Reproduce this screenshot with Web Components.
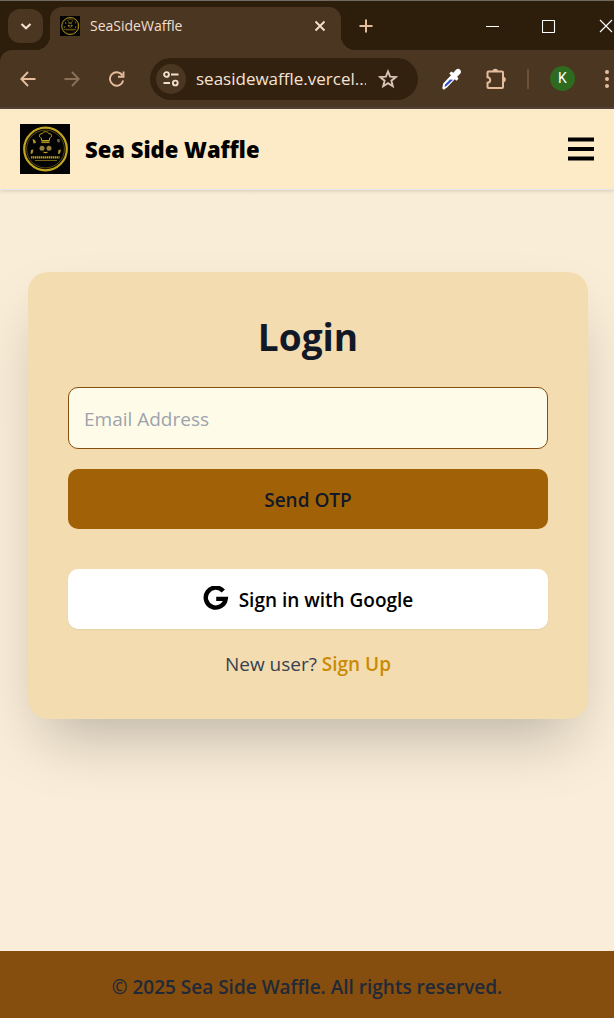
<!DOCTYPE html>
<html lang="en">
<head>
<meta charset="utf-8">
<meta name="viewport" content="width=device-width, initial-scale=1">
<title>SeaSideWaffle</title>
<style>
  html, body { margin: 0; }
  body { font-family: "Open Sans", "Noto Sans", sans-serif; font-size: 19px; line-height: 30px; color: #000; background: #faedd7; }
</style>
</head>
<body>
<browser-window>
  <tab-strip slot="chrome">SeaSideWaffle</tab-strip>
  <tool-bar slot="chrome" address="seasidewaffle.vercel..."></tool-bar>
  <site-header>Sea Side Waffle</site-header>
  <login-card heading="Login"></login-card>
  <site-footer>© 2025 Sea Side Waffle. All rights reserved.</site-footer>
</browser-window>

<script>
const define = (name, html, setup) => customElements.define(name, class extends HTMLElement {
  constructor() {
    super();
    this.attachShadow({ mode: 'open' }).innerHTML = html;
  }
  connectedCallback() { if (setup) setup(this, this.shadowRoot); }
});

const reset = `
  :host, *, *::before, *::after { box-sizing: border-box; }
  button { font: inherit; border: 0; padding: 0; margin: 0; background: none; color: inherit; cursor: pointer;
           display: flex; align-items: center; justify-content: center; }
  svg { display: block; flex: none; }`;

define('waffle-logo', `
<style>:host { display: block; width: 50px; height: 50px; flex: none; } svg { display: block; width: 100%; height: 100%; }</style>
<svg viewBox="0 0 50 50" aria-hidden="true">
  <rect width="50" height="50" fill="#030303"/>
  <g fill="none" stroke="#c2a41e">
    <circle cx="25.5" cy="25" r="21.300" stroke-width="2.200"/>
    <circle cx="25.5" cy="25" r="18.900" stroke-width=".6" stroke="#8f7a1c"/>
    <path d="M21.500 16.500v-2.300c-3.200-.9-2.600-4.900.6-4.500.7-2.600 6.100-2.600 6.800 0 3.200-.4 3.800 3.600.6 4.500v2.300z" stroke-width="1"/>
    <path d="M21.500 18.200h8" stroke-width="1.800" stroke="#a68b24"/>
    <path d="M23.500 28q2 1.300 4 0" stroke-width="1.200"/>
    <path d="M15 36.500h22" stroke-width=".6"/>
  </g>
  <g fill="#94803a"><circle cx="22" cy="24.300" r="2.500"/><circle cx="29" cy="24.300" r="2.500"/></g>
  <g fill="#b3952a"><path d="M12.500 15l2.500 1 1 3-2.500.5zM11 26l2.500-.5-1 4-2 .5zM38.500 26l2.500-.5-1 4-2 .5z"/><path d="M37 15h2.500l.5 3-2.500.5z" fill="#6c6148"/></g>
  <path d="M11 33.300h28.500" stroke="#b99a1c" stroke-width="2.200" stroke-dasharray="1.500 .5"/>
</svg>`);

define('browser-window', `
<style>
  :host { display: flex; flex-direction: column; min-height: 100vh; overflow-x: hidden; }
  main { flex: 1; display: flex; flex-direction: column; background: linear-gradient(#faedd7, #faeeda); }
</style>
<slot name="chrome"></slot>
<main><slot></slot></main>`);

define('tab-strip', `
<style>${reset}
  :host { display: flex; align-items: center; height: 50px; padding: 0 1px 0 8px; background: #2d1d0b;
          border-top: 1px solid #6f6b62; color: #f2dfcf; font-size: 14px; line-height: 20px; overflow: hidden; }
  .search { width: 35px; height: 34px; border-radius: 12px; background: #4b3621; }
  .tab { position: relative; align-self: flex-end; display: flex; align-items: center; width: 291px; height: 43px;
         margin-left: 7px; padding: 0 12px 6px 10px; border-radius: 12px 12px 0 0; background: #4b3621; }
  .tab::before, .tab::after { content: ""; position: absolute; bottom: 0; width: 14px; height: 14px; }
  .tab::before { right: 100%; background: radial-gradient(circle at 0 0, transparent 14px, #4b3621 14px); }
  .tab::after { left: 100%; background: radial-gradient(circle at 100% 0, transparent 14px, #4b3621 14px); }
  waffle-logo { width: 20px; height: 20px; }
  .title { flex: 1; padding-left: 10px; white-space: nowrap; }
  .close { width: 18px; height: 20px; }
  .new { width: 30px; height: 30px; margin-left: 10px; color: #e5bd9d; }
  .controls { display: flex; gap: 43px; margin-left: auto; color: #fff; }
</style>
<button class="search" aria-label="Search tabs"><svg width="14" height="14" viewBox="0 0 14 14" fill="none" stroke="currentColor" stroke-width="2.200"><path d="M2.500 5L7 9.300 11.500 5"/></svg></button>
<div class="tab"><waffle-logo></waffle-logo><span class="title"><slot></slot></span>
  <button class="close" aria-label="Close tab"><svg width="12" height="12" viewBox="0 0 12 12" fill="none" stroke="currentColor" stroke-width="1.900"><path d="M1.500 1.500l9 9M10.500 1.500l-9 9"/></svg></button></div>
<button class="new" aria-label="New tab"><svg width="14" height="14" viewBox="0 0 14 14" fill="none" stroke="currentColor" stroke-width="2"><path d="M7 .5v13M.5 7h13"/></svg></button>
<div class="controls">
  <button aria-label="Minimize"><svg width="14" height="14" viewBox="0 0 14 14"><path d="M1 7.500h13" stroke="#fff" fill="none"/></svg></button>
  <button aria-label="Maximize"><svg width="14" height="14" viewBox="0 0 14 14"><rect x=".5" y="1.500" width="12" height="12" rx=".5" stroke="#fff" stroke-width="1.100" fill="none"/></svg></button>
  <button aria-label="Close window"><svg width="14" height="14" viewBox="0 0 14 14"><path d="M1 1l12 12M13 1L1 13" stroke="#fff" stroke-width="1.200" fill="none"/></svg></button>
</div>`);

define('tool-bar', `
<style>${reset}
  :host { display: block; background: #2d1d0b; color: #e5bd9d; }
  .bar { display: flex; align-items: center; height: 59px; padding: 0 4px 0 6px; background: #4b3621;
         border-radius: 12px 0 0 0; border-bottom: 2px solid #564238; }
  .icon { width: 44px; height: 44px; flex: none; }
  .forward { color: #8b7058; }
  .address { flex: 1; min-width: 0; display: flex; align-items: center; height: 42px; margin: 0 12px; padding: 0 8px 0 6px;
             border-radius: 21px; background: #332110; }
  .info { width: 30px; height: 30px; flex: none; border-radius: 50%; background: #4b3621; color: #f2dfcf; }
  input { flex: 1; min-width: 0; height: 30px; padding: 0; margin: 0 0 0 10px; border: 0; outline: 0; background: none;
          color: #f6e3d3; font: 17px/30px "Open Sans", "Noto Sans", sans-serif; }
  .star { width: 44px; height: 40px; flex: none; color: #d8c5b5; }
  .rule { width: 2px; height: 20px; margin: 0 21px 0 9px; flex: none; background: #6b5138; }
  .avatar { width: 25px; height: 25px; flex: none; border-radius: 50%; background: #2f6b1f; color: #fff; font: 14px/25px Roboto, sans-serif; }
  .menu { width: 6px; height: 24px; margin-left: 29px; flex: none; }
</style>
<div class="bar">
  <button class="icon" aria-label="Back"><svg width="16" height="16" viewBox="0 0 16 16" fill="none" stroke="currentColor" stroke-width="1.900"><path d="M15.500 8H1.500M8 1L1.300 8 8 15"/></svg></button>
  <button class="icon forward" aria-label="Forward"><svg width="16" height="16" viewBox="0 0 16 16" fill="none" stroke="currentColor" stroke-width="1.900"><path d="M.5 8h14M8 1l6.700 7L8 15"/></svg></button>
  <button class="icon" aria-label="Reload"><svg width="18" height="16" viewBox="0 0 18 16" fill="none" stroke="currentColor" stroke-width="1.900"><path d="M15.300 4.300A6.700 6.700 0 1 0 16.200 9.500M16.500 .5v5.300H11"/></svg></button>
  <div class="address">
    <button class="info" aria-label="Site information"><svg width="16" height="16" viewBox="0 0 16 16" fill="none" stroke="currentColor" stroke-width="1.900"><circle cx="3.500" cy="3.500" r="2.400"/><path d="M8 3.500h7.500M.5 12H7"/><circle cx="12.300" cy="12" r="2.400"/></svg></button>
    <input type="text" aria-label="Address" spellcheck="false">
    <button class="star" aria-label="Bookmark this tab"><svg width="20" height="20" viewBox="0 0 20 20" fill="none" stroke="currentColor" stroke-width="1.900"><path d="M10 2.500l2.100 5.100 5.600.5-4.300 3.600 1.400 5.500-4.800-3-4.800 3 1.400-5.500L2.300 8.100l5.600-.5z"/></svg></button>
  </div>
  <button class="icon" aria-label="Color picker"><svg width="20" height="22" viewBox="0 0 20 22"><path d="M.3 20.300L1.200 15.500 9 7.300 7.300 5.600 9.300 3.600l1.900 1.200 3-3.200c1.200-1.200 2.800-1 3.900.1s1.300 2.800.1 4l-3 3.100 1.300 2-2 2-1.700-1.600L5 19.500 1.700 21.700z" fill="#fff"/><path d="M3.100 16.600L8 11.500l3 .2-6.800 6.500-1.700.7z" fill="#2d4fc4"/></svg></button>
  <button class="icon" aria-label="Extensions"><svg width="22" height="22" viewBox="0 0 22 22"><path d="M2.500 4.500q0-1 1-1H17q1 0 1 1V19q0 1-1 1H3.500q-1 0-1-1v-4.200c3.600 0 3.600-5.600 0-5.600z" fill="none" stroke="currentColor" stroke-width="2"/><path d="M7.500 3.500a2.800 2.800 0 0 1 5.600 0zM18 8.800a2.800 2.800 0 0 1 0 5.600z" fill="currentColor"/></svg></button>
  <span class="rule"></span>
  <button class="avatar" aria-label="Profile K">K</button>
  <button class="menu" aria-label="Browser menu"><svg width="6" height="20" viewBox="0 0 6 20" fill="currentColor"><circle cx="3" cy="3" r="2"/><circle cx="3" cy="10" r="2"/><circle cx="3" cy="17" r="2"/></svg></button>
</div>`, (host, root) => { root.querySelector('input').value = host.getAttribute('address'); });

define('site-header', `
<style>${reset}
  :host { display: block; }
  header { display: flex; align-items: center; height: 81px; padding: 0 20px; background: #fdeac7;
           border-bottom: 1px solid #e5e7eb; box-shadow: 0 1px 4px rgba(0,0,0,.15); }
  .brand { display: flex; align-items: center; gap: 15px; color: #000; text-decoration: none;
           font-size: 22px; font-weight: 800; white-space: nowrap; }
  button { margin-left: auto; width: 26px; height: 30px; }
</style>
<header><a class="brand" href="#"><waffle-logo></waffle-logo><span><slot></slot></span></a>
<button aria-label="Open menu"><svg width="26" height="24" viewBox="0 0 26 24"><path d="M0 2.500h26M0 12h26M0 21.500h26" stroke="#000" stroke-width="4"/></svg></button></header>`);

define('login-card', `
<style>${reset}
  :host { flex: 1; display: block; padding: 82px 26px 80px 28px; }
  section { max-width: 560px; margin: 0 auto; padding: 40px; border-radius: 20px; background: #f3dcb0;
            box-shadow: 0 31px 62px -15px rgba(0,0,0,.25); text-align: center; }
  h1 { margin: 0 0 25px; font-size: 37px; line-height: 50px; font-weight: 700; color: #111827; }
  form { display: flex; flex-direction: column; gap: 20px; }
  input { width: 100%; height: 62px; padding: 2px 15px 0; border: 1px solid #854d0e; border-radius: 10px; background: #fefce8;
          font: inherit; color: #111827; outline: 0; }
  input::placeholder { color: #9ca3af; opacity: 1; }
  button { width: 100%; height: 60px; border-radius: 10px; font-weight: 600; }
  button span { padding-top: 2px; }
  .send { background: #a16207; color: #111827; }
  .google { gap: 10px; margin-top: 40px; background: #fff; color: #000; box-shadow: 0 1px 2px rgba(0,0,0,.06); }
  p { margin: 20px 0 0; color: #374151; }
  a { color: #ca8a04; font-weight: 600; text-decoration: none; }
</style>
<section>
  <h1></h1>
  <form>
    <input type="email" placeholder="Email Address" aria-label="Email Address">
    <button class="send" type="button"><span>Send OTP</span></button>
  </form>
  <button class="google" type="button"><svg width="26" height="26" viewBox="0 0 26 26" fill="none" stroke="#000" stroke-width="4.400"><path d="M20.300 5A10 10 0 1 0 22.700 12.900H13.200"/></svg><span>Sign in with Google</span></button>
  <p>New user? <a href="#">Sign Up</a></p>
</section>`, (host, root) => { root.querySelector('h1').textContent = host.getAttribute('heading'); });

define('site-footer', `
<style>
  :host { display: block; }
  footer { padding: 21px 20px 16px; background: #854d0e; color: #1f2937; font-weight: 600; text-align: center; }
</style>
<footer><slot></slot></footer>`);
</script>
</body>
</html>
